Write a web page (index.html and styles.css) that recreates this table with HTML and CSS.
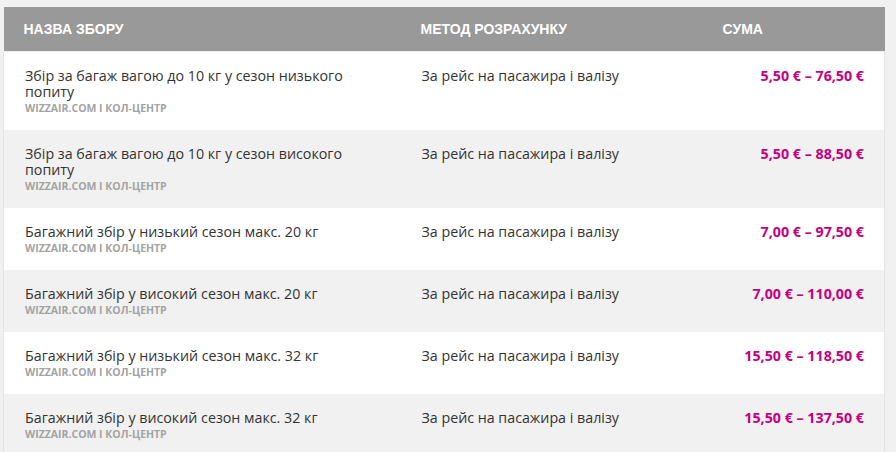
FILE: index.html
```html
<!DOCTYPE html>
<html lang="uk">
<head>
<meta charset="utf-8">
<title>Збори</title>
<link rel="stylesheet" href="styles.css">
</head>
<body>
<table class="fees">
  <colgroup>
    <col class="c-name">
    <col class="c-method">
    <col class="c-sum">
  </colgroup>
  <thead>
    <tr>
      <th>Назва збору</th>
      <th>Метод розрахунку</th>
      <th>Сума</th>
    </tr>
  </thead>
  <tbody>
    <tr>
      <td class="name"><div class="title">Збір за багаж вагою до 10 кг у сезон низького попиту</div><div class="sub">WIZZAIR.COM І КОЛ-ЦЕНТР</div></td>
      <td class="method">За рейс на пасажира і валізу</td>
      <td class="sum">5,50 € – 76,50 €</td>
    </tr>
    <tr>
      <td class="name"><div class="title">Збір за багаж вагою до 10 кг у сезон високого попиту</div><div class="sub">WIZZAIR.COM І КОЛ-ЦЕНТР</div></td>
      <td class="method">За рейс на пасажира і валізу</td>
      <td class="sum">5,50 € – 88,50 €</td>
    </tr>
    <tr>
      <td class="name"><div class="title">Багажний збір у низький сезон макс. 20 кг</div><div class="sub">WIZZAIR.COM І КОЛ-ЦЕНТР</div></td>
      <td class="method">За рейс на пасажира і валізу</td>
      <td class="sum">7,00 € – 97,50 €</td>
    </tr>
    <tr>
      <td class="name"><div class="title">Багажний збір у високий сезон макс. 20 кг</div><div class="sub">WIZZAIR.COM І КОЛ-ЦЕНТР</div></td>
      <td class="method">За рейс на пасажира і валізу</td>
      <td class="sum">7,00 € – 110,00 €</td>
    </tr>
    <tr>
      <td class="name"><div class="title">Багажний збір у низький сезон макс. 32 кг</div><div class="sub">WIZZAIR.COM І КОЛ-ЦЕНТР</div></td>
      <td class="method">За рейс на пасажира і валізу</td>
      <td class="sum">15,50 € – 118,50 €</td>
    </tr>
    <tr>
      <td class="name"><div class="title">Багажний збір у високий сезон макс. 32 кг</div><div class="sub">WIZZAIR.COM І КОЛ-ЦЕНТР</div></td>
      <td class="method">За рейс на пасажира і валізу</td>
      <td class="sum">15,50 € – 137,50 €</td>
    </tr>
  </tbody>
</table>
</body>
</html>
```

FILE: styles.css
```css
html, body {
  margin: 0;
  padding: 0;
  background: #f1f1f1;
}
body {
  padding: 7px 0 0 3px;
  font-family: "Open Sans", "Noto Sans", sans-serif;
  color: #333;
}
.fees {
  width: 881px;
  border-collapse: collapse;
  table-layout: fixed;
}
.c-name { width: 397px; }
.c-method { width: 302px; }
.c-sum { width: 182px; }

.fees th {
  height: 44px;
  padding: 0 0 0 20px;
  background: #999;
  color: #fff;
  font-family: "Liberation Sans", Arial, sans-serif;
  font-weight: bold;
  font-size: 14px;
  text-transform: uppercase;
  text-align: left;
  border-bottom: 1px solid #ececec;
}
.fees td {
  vertical-align: top;
  padding: 16px 0 14px 21px;
  font-size: 14.25px;
  line-height: 16px;
}
.fees tbody tr:nth-child(odd) { background: #fff; }
.fees tbody tr:nth-child(even) { background: #f1f1f1; }
.fees td.name { border-left: 1px solid #e4e4e4; padding-left: 21px; }
.fees td.sum { border-right: 1px solid #e4e4e4; }
.title { padding-right: 40px; }
.sub {
  font-size: 10.5px;
  font-weight: bold;
  color: #a3a3a3;
  line-height: 16px;
}
.sum {
  text-align: right;
  padding-right: 20px !important;
  font-weight: bold;
  font-size: 15.75px;
  color: #c6007e;
}
```
